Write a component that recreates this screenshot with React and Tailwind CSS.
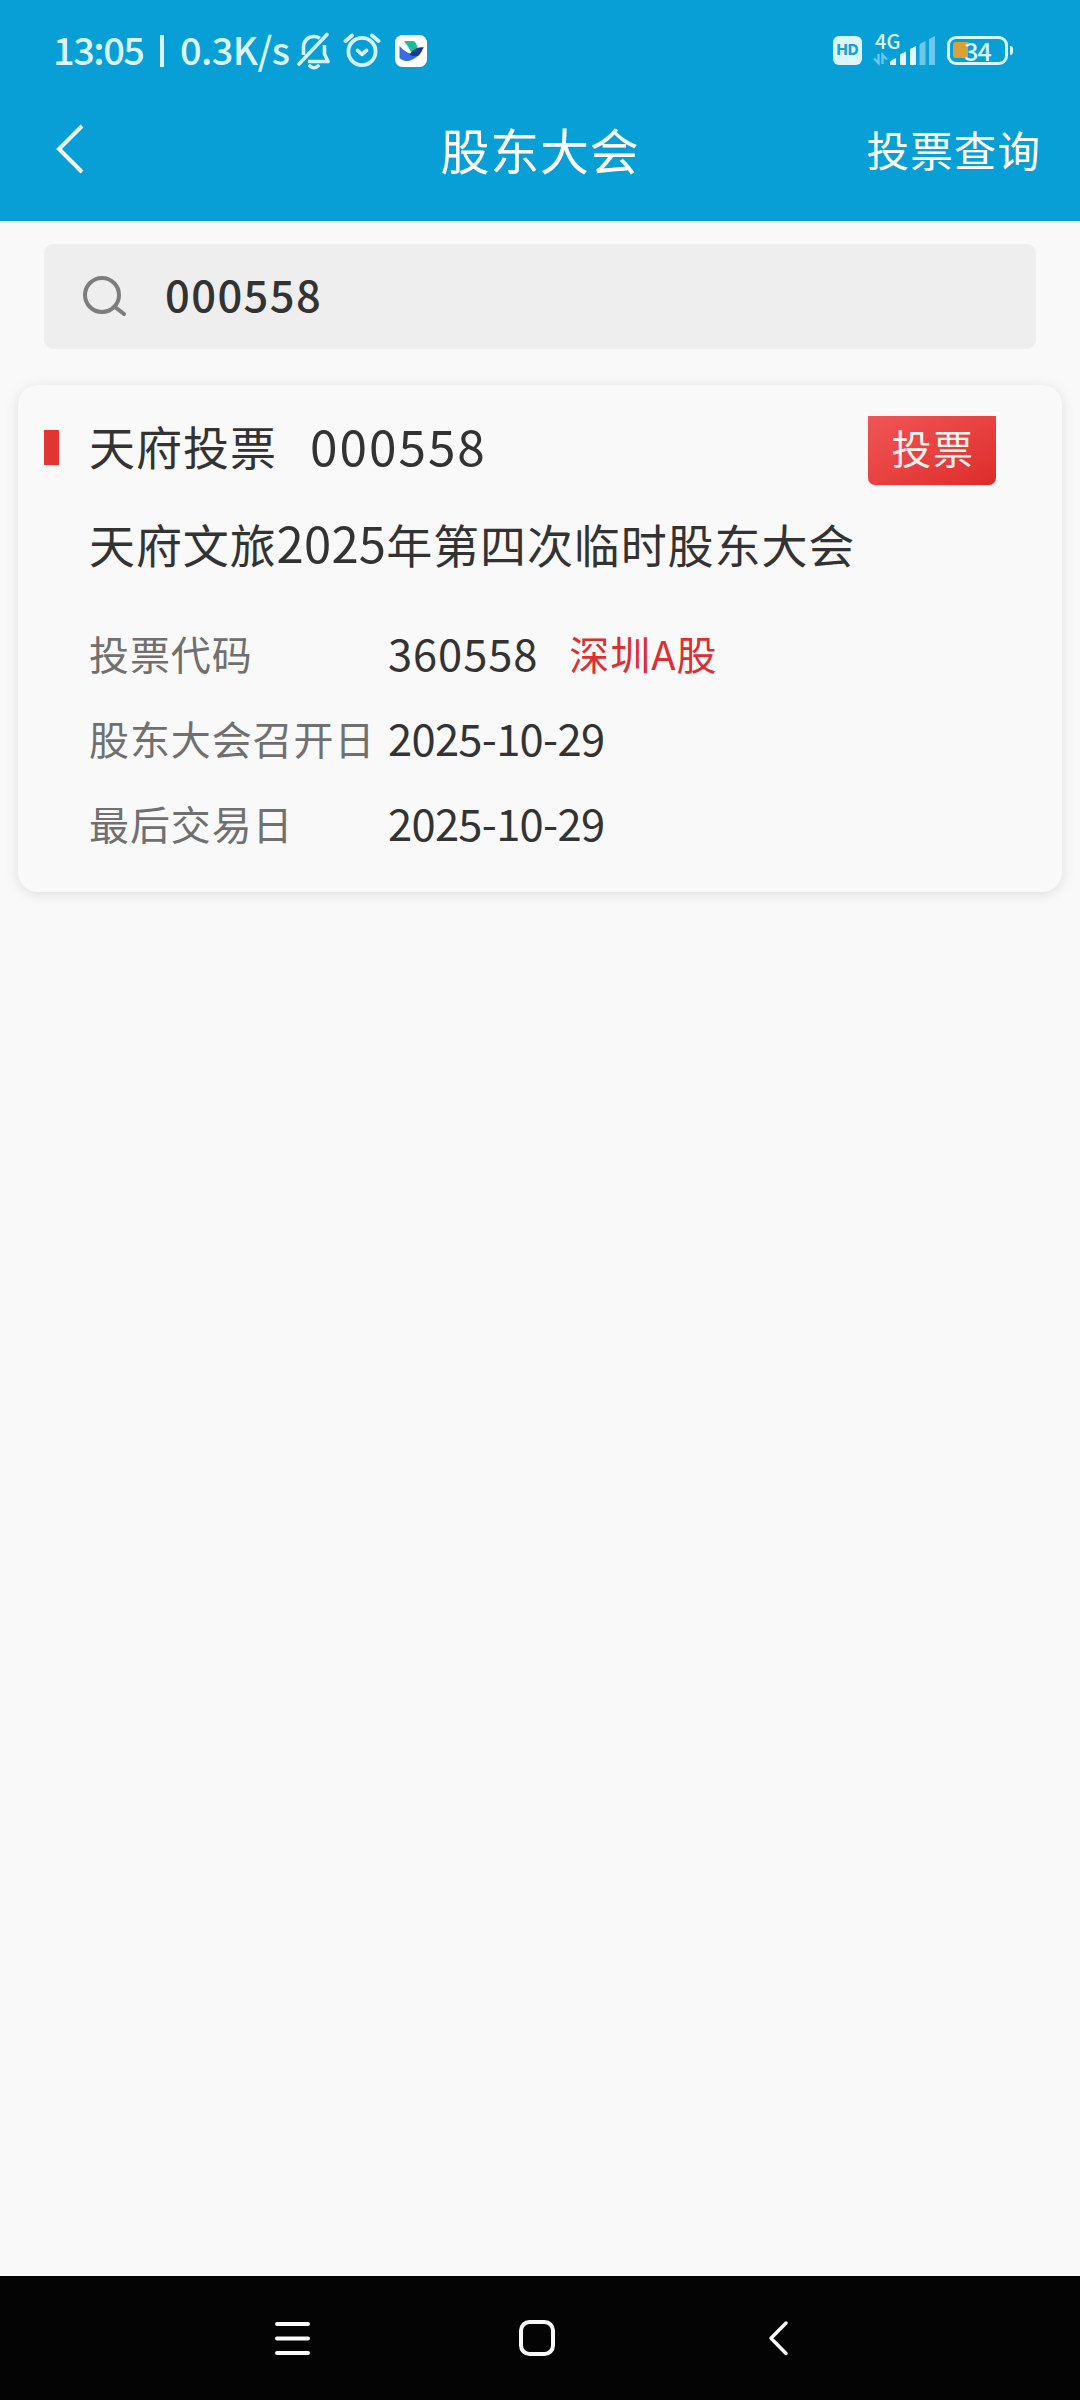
const CJK = "font-['Noto_Sans_CJK_SC',sans-serif]";

const ROWS = [
  { label: '投票代码', value: '360558', market: '深圳A股' },
  { label: '股东大会召开日', value: '2025-10-29' },
  { label: '最后交易日', value: '2025-10-29' },
];

function BellOffIcon() {
  return (
    <svg width="36" height="40" viewBox="0 0 36 40" fill="none" stroke="#d4f3ff" strokeWidth="3.6" strokeLinejoin="round">
      <path d="M7.5 24V16C7.500 9.500 12.500 5.500 18 5.500C20 5.500 22 6 23.800 7.200" />
      <path d="M28.500 14V23L32 30.500H12" />
      <path d="M31 3.500L3 33" strokeLinecap="round" />
      <path d="M14 35Q18 38.500 22 35" strokeLinecap="round" />
    </svg>
  );
}

function AlarmIcon() {
  return (
    <svg width="38" height="36" viewBox="0 0 38 36" fill="none" stroke="#d4f3ff" strokeWidth="3.8" strokeLinecap="round" strokeLinejoin="round">
      <circle cx="19" cy="19.5" r="13.6" />
      <path d="M14.5 18.500L19 22.300L23.500 18.500" />
      <path d="M2.500 9L9 3.500" />
      <path d="M29 3.500L35.500 9" />
    </svg>
  );
}

function BirdAppIcon() {
  return (
    <svg width="32" height="32" viewBox="0 0 32 32">
      <rect width="32" height="32" rx="7.5" fill="#fcfeff" />
      <path d="M9 6H19C21 8 22.300 10.500 22.600 13L16.500 18.500C15 13.500 11.500 9.500 9 6Z" fill="#17bd9b" />
      <path d="M4.500 11C9 16 14.500 19.500 22.500 20.500C19.500 24.500 15 26 11.500 26C8.500 26 6 24.500 4.500 23Z" fill="#3a6be8" />
      <path d="M14.500 19.500C17.500 15.500 22 11 29 12.500C26.500 15 26 20.500 21.500 21.500C19 21.500 16.500 20.500 14.500 19.500Z" fill="#173a8f" />
    </svg>
  );
}

function SignalIcon() {
  return (
    <svg width="62" height="34" viewBox="0 0 62 34" fill="#e2f7ff">
      <g fill="none" stroke="#6cc7ea" strokeWidth="2.4">
        <path d="M5.500 22V31L1 26.500" />
        <path d="M9.500 32V23L14 27.500" />
      </g>
      <path d="M17 30Q19 27.500 23 26V33H17Z" />
      <path d="M27 22.500L33 19.500V33H27Z" />
      <path d="M37 17L43 14V33H37Z" />
      <path d="M46.500 12L52.500 9V33H46.500Z" fill="#6cc7ea" />
      <path d="M56 7L62 4V33H56Z" fill="#6cc7ea" />
    </svg>
  );
}

function StatusBar() {
  return (
    <div className="flex h-[100px] items-start text-[#dcf6ff]">
      <div className="ml-[53px] flex h-[96px] items-center text-[38px] font-medium">
        <span className="w-[107px] tracking-[-1.5px]">13:05</span>
        <span className="mt-[6px] h-[32px] w-[4px] bg-[#dcf6ff]" />
        <span className="ml-[16px] w-[116px] tracking-[-0.6px]">0.3K/s</span>
      </div>
      <div className="mt-[31px] flex items-start">
        <BellOffIcon />
        <div className="ml-[11px] mt-px"><AlarmIcon /></div>
        <div className="ml-[14px] mt-[4px]"><BirdAppIcon /></div>
      </div>
      <div className="ml-auto mr-[67px] mt-[32px] flex items-start">
        <div className="mt-[4px] flex h-[29px] w-[29px] items-center justify-center rounded-[6px] bg-[#dcf6ff] font-['Inter',sans-serif] text-[15px] font-extrabold text-[#1a9fcf]">
          HD
        </div>
        <div className="relative ml-[11px] h-[34px] w-[62px]">
          <SignalIcon />
          <span className="absolute left-[2px] top-[-1px] text-[20px] leading-[20px] font-medium">4G</span>
        </div>
        <div className="relative ml-[12px] mt-[4px] flex h-[29px] w-[61px] items-center justify-center rounded-[9px] border-[3.5px] border-[#dcf6ff]">
          <span className="absolute left-[3px] top-[3px] h-[16px] w-[15px] rounded-l-[3px] bg-[#dba036]" />
          <span className="relative pb-[2px] text-[25px] leading-[22px] font-medium tracking-[-1px]">34</span>
        </div>
        <span className="ml-[2px] mt-[14px] h-[9px] w-[3px] rounded-r-[3px] bg-[#dcf6ff]" />
      </div>
    </div>
  );
}

function TitleBar() {
  return (
    <div className="grid h-[94px] grid-cols-[1fr_auto_1fr] items-center text-white">
      <svg className="ml-[55px] mt-[4px]" width="32" height="50" viewBox="0 0 32 50" fill="none" stroke="#f2fcff" strokeWidth="4">
        <path d="M27 2L4 25L27 48" />
      </svg>
      <h1 className="mt-[3px] text-[49px] tracking-[0.8px]">股东大会</h1>
      <span className="mr-[39px] mt-[3px] justify-self-end text-[42.5px] tracking-[1.1px]">投票查询</span>
    </div>
  );
}

function MeetingCard() {
  return (
    <section className="ml-[18px] mt-[36px] h-[507px] w-[1044px] rounded-[20px] bg-[#f9f9f9] pt-[31px] shadow-[0_2px_14px_rgba(0,0,0,0.11)]">
      <div className="flex h-[69px] items-start text-[#333333]">
        <span className="ml-[26px] mt-[14px] h-[35px] w-[15px] bg-[#e33434]" />
        <h2 className="ml-[30px] w-[221px] text-[46px] leading-[58px] tracking-[1px]">天府投票</h2>
        <span className="text-[49.5px] leading-[58px] tracking-[2px]">000558</span>
        <button className="ml-auto mr-[66px] h-[69px] w-[128px] rounded-b-[7px] bg-gradient-to-br from-[#f15555] to-[#de2a2a] pb-[7px] pl-[2px] text-[40px] leading-[60px] tracking-[1.5px] text-[#fff1ee]">
          投票
        </button>
      </div>
      <p className="ml-[71px] mt-[27px] h-[60px] whitespace-nowrap text-[46px] leading-[60px] tracking-[0.9px] text-[#333333]">
        天府文旅<span className="text-[49px] tracking-[0.2px]">2025</span>年第四次临时股东大会
      </p>
      <div className="mt-[38px]">
        {ROWS.map((row) => (
          <div key={row.label} className="flex h-[85px] items-center text-[#333333]">
            <span className="ml-[71px] w-[299px] whitespace-nowrap text-[40px] tracking-[0.9px] text-[#707070]">{row.label}</span>
            {row.market ? (
              <>
                <span className="pt-px text-[43.5px] tracking-[0.9px]">{row.value}</span>
                <span className="ml-[31px] text-[40px] tracking-[1px] text-[#dc2f32]">{row.market}</span>
              </>
            ) : (
              <span className="pt-px text-[43.5px] tracking-[-0.7px]">{row.value}</span>
            )}
          </div>
        ))}
      </div>
    </section>
  );
}

function NavBar() {
  return (
    <nav className="mt-auto flex h-[124px] items-start bg-[#040404] pt-[42px]">
      <svg className="ml-[273px]" width="40" height="40" viewBox="0 0 40 40" stroke="#fafafa" strokeWidth="4" strokeLinecap="round">
        <path d="M4 6H35M4 20.5H35M4 35H35" />
      </svg>
      <svg className="ml-[204px]" width="40" height="40" viewBox="0 0 40 40" fill="none" stroke="#fafafa" strokeWidth="4">
        <rect x="4" y="4" width="32" height="32" rx="8.5" />
      </svg>
      <svg className="ml-[203px]" width="40" height="40" viewBox="0 0 40 40" fill="none" stroke="#fafafa" strokeWidth="3.5" strokeLinecap="round" strokeLinejoin="round">
        <path d="M26 5L11 20.3L26 35.5" />
      </svg>
    </nav>
  );
}

export default function App() {
  return (
    <div className={`flex h-[2400px] w-[1080px] flex-col overflow-hidden bg-[#f9f9f9] ${CJK}`}>
      <header className="h-[221px] bg-[#079fd6]">
        <StatusBar />
        <TitleBar />
      </header>

      <div className="ml-[44px] mt-[23px] flex h-[105px] w-[992px] shrink-0 items-center rounded-[9px] bg-[#eeeeee]">
        <svg className="ml-[38px]" width="46" height="44" viewBox="0 0 46 44" fill="none" stroke="#7d7d7d" strokeWidth="4" strokeLinecap="round">
          <circle cx="20" cy="20" r="17" />
          <path d="M33 32L42 39" />
        </svg>
        <span className="ml-[37px] pb-[5px] text-[43.5px] font-medium tracking-[1.4px] text-[#333333]">000558</span>
      </div>

      <MeetingCard />
      <NavBar />
    </div>
  );
}
